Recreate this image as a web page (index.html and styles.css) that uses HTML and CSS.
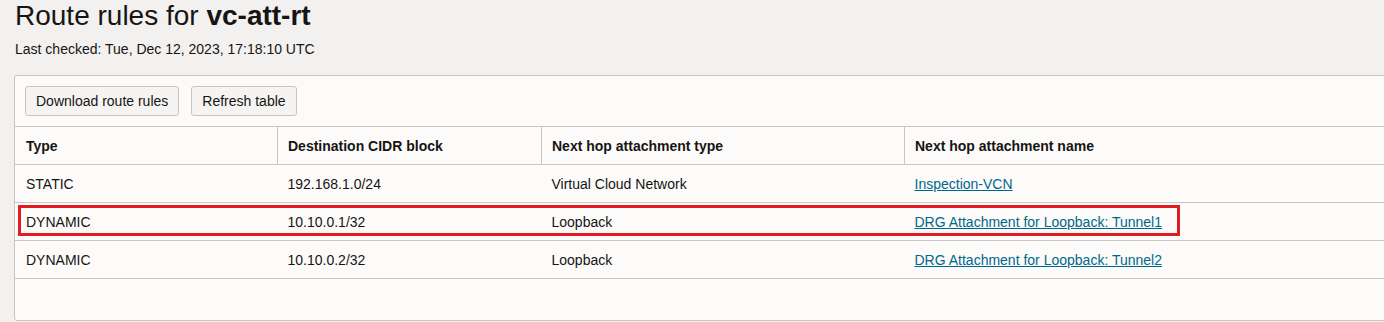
FILE: index.html
```html
<!DOCTYPE html>
<html>
<head>
<meta charset="utf-8">
<link rel="stylesheet" href="styles.css">
</head>
<body>
<h1 class="title">Route rules for <b>vc-att-rt</b></h1>
<p class="checked">Last checked: Tue, Dec 12, 2023, 17:18:10 UTC</p>
<div class="panel">
  <div class="toolbar">
    <button class="btn">Download route rules</button>
    <button class="btn">Refresh table</button>
  </div>
  <table class="rules">
    <thead>
      <tr>
        <th class="c1">Type</th>
        <th class="c2">Destination CIDR block</th>
        <th class="c3">Next hop attachment type</th>
        <th class="c4">Next hop attachment name</th>
      </tr>
    </thead>
    <tbody>
      <tr><td>STATIC</td><td>192.168.1.0/24</td><td>Virtual Cloud Network</td><td><a href="#">Inspection-VCN</a></td></tr>
      <tr class="marked"><td>DYNAMIC</td><td>10.10.0.1/32</td><td>Loopback</td><td><a href="#">DRG Attachment for Loopback: Tunnel1</a></td></tr>
      <tr><td>DYNAMIC</td><td>10.10.0.2/32</td><td>Loopback</td><td><a href="#">DRG Attachment for Loopback: Tunnel2</a></td></tr>
    </tbody>
  </table>
  <div class="highlight"></div>
</div>
</body>
</html>
```
FILE: styles.css
```css
html, body {
  margin: 0;
  padding: 0;
  background: #f2f1f0;
  overflow: hidden;
}
body {
  padding-left: 14px;
  font-family: "Liberation Sans", Arial, sans-serif;
  color: #161513;
}
.title {
  margin: 0 0 0 1px;
  font-size: 28px;
  line-height: 32px;
  font-weight: normal;
}
.title b {
  font-weight: bold;
}
.checked {
  margin: 9px 0 0 1px;
  font-size: 14px;
  line-height: 16px;
}
.panel {
  position: relative;
  margin-top: 18px;
  margin-right: -20px;
  height: 244px;
  background: #fcfbfa;
  border: 1px solid #c8c4be;
  border-radius: 3px;
}
.toolbar {
  display: flex;
  gap: 12px;
  padding: 10px 10px 10px 10px;
}
.btn {
  height: 30px;
  padding: 0 10px;
  background: #f5f4f2;
  border: 1px solid #c8c4be;
  border-radius: 3px;
  font-family: "Liberation Sans", Arial, sans-serif;
  font-size: 14px;
  color: #161513;
}
.rules {
  width: 100%;
  border-collapse: collapse;
  table-layout: fixed;
  font-size: 14px;
}
.rules th, .rules td {
  height: 37px;
  padding: 0 10px;
  text-align: left;
  border-top: 1px solid #cac6c0;
  border-bottom: 1px solid #cac6c0;
  white-space: nowrap;
}
.rules th {
  font-weight: bold;
  font-size: 14px;
}
.rules th + th {
  border-left: 1px solid #cac6c0;
}
.rules th.c1 { width: 241px; padding-left: 11px; }
.rules th.c2 { width: 243px; }
.rules th.c3 { width: 342px; }
.rules td:first-child { padding-left: 11px; }
.rules a {
  color: #00688c;
  text-decoration: underline;
}
.highlight {
  position: absolute;
  left: 3px;
  top: 129px;
  width: 1156px;
  height: 25px;
  border: 3px solid #e31b23;
  pointer-events: none;
}
```
